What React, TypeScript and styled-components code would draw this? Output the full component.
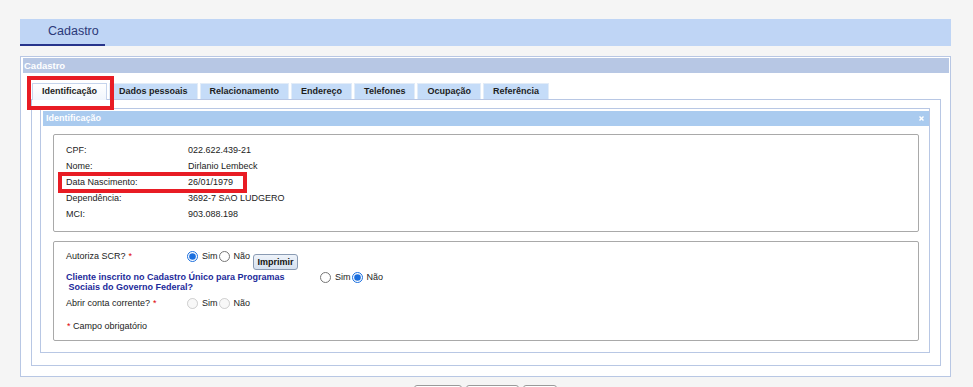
import React from "react";
import styled, { createGlobalStyle, css } from "styled-components";

const GlobalStyle = createGlobalStyle`
  html, body {
    margin: 0;
    padding: 0;
    background: #f5f5f5;
    font-family: "Liberation Sans", Arial, sans-serif;
    color: #222;
  }
`;

const Page = styled.div`
  padding: 19px 0 0 20px;
  width: 931px;
`;

const TopBar = styled.div`
  height: 27px;
  background: #bfd5f5;
  display: flex;
`;

const TopTab = styled.div`
  width: 85px;
  box-sizing: border-box;
  padding-left: 28px;
  line-height: 25px;
  font-size: 12.5px;
  color: #2c3979;
  border-bottom: 2px solid #27348b;
`;

const Panel = styled.div`
  margin-top: 10px;
  border: 1px solid #b8c7e4;
  background: #fff;
  padding: 1px 1px 10px 2px;
`;

const PanelHeader = styled.div`
  height: 15px;
  line-height: 15px;
  background: #b7c7e4;
  color: #fff;
  font-weight: bold;
  font-size: 9.5px;
  padding-left: 1px;
`;

const TabArea = styled.div`
  margin: 10px 8px 0 8px;
`;

const TabList = styled.div`
  display: flex;
  gap: 2px;
  padding-left: 1px;
  height: 16px;
`;

const Tab = styled.div<{ $active?: boolean; $marked?: boolean }>`
  position: relative;
  box-sizing: border-box;
  height: 16px;
  line-height: 14px;
  padding: 0 9px;
  font-size: 9px;
  font-weight: bold;
  color: #1d1d1d;
  background: #c5dcf8;
  border: 1px solid #e2ecf8;
  border-bottom: none;
  ${(p) =>
    p.$active &&
    css`
      height: 17px;
      background: linear-gradient(#ffffff, #f1f6fd);
      border-color: #c6d4ec;
      z-index: 1;
    `}
  ${(p) =>
    p.$marked &&
    css`
      &::after {
        content: "";
        position: absolute;
        left: -6px;
        top: -8px;
        width: 87px;
        height: 34px;
        box-sizing: border-box;
        border: 4px solid #e81c24;
      }
    `}
`;

const TabPanel = styled.div`
  border: 1px solid #b8c7e4;
  padding: 8px 10px 12px 8px;
`;

const Fieldset = styled.div`
  border: 1px solid #b8c7e4;
  padding: 2px 0 11px 2px;
`;

const FieldsetHeader = styled.div`
  height: 15px;
  line-height: 15px;
  background: #aacbef;
  color: #fff;
  font-weight: bold;
  font-size: 9px;
  padding: 0 5px 0 3px;
  display: flex;
  justify-content: space-between;
  align-items: center;
`;

const Box = styled.div<{ $height: number; $top: number }>`
  box-sizing: border-box;
  height: ${(p) => p.$height}px;
  margin: ${(p) => p.$top}px 10px 0 10px;
  border: 1px solid #a9a9a9;
  border-radius: 2px;
  padding: 7px 12px 0 12px;
  font-size: 9px;
`;

const InfoRow = styled.div<{ $marked?: boolean }>`
  position: relative;
  display: flex;
  line-height: 16px;
  ${(p) =>
    p.$marked &&
    css`
      &::after {
        content: "";
        position: absolute;
        left: -8px;
        top: -2px;
        width: 189px;
        height: 21px;
        box-sizing: border-box;
        border: 4px solid #e81c24;
      }
    `}
`;

const Label = styled.div<{ $width: number; $strong?: boolean }>`
  width: ${(p) => p.$width}px;
  flex-shrink: 0;
  ${(p) =>
    p.$strong &&
    css`
      font-weight: bold;
      color: #1c2a9a;
      line-height: 10px;
    `}
`;

const FormRow = styled.div<{ $top: number }>`
  display: flex;
  align-items: flex-start;
  margin-top: ${(p) => p.$top}px;
  line-height: 15px;
`;

const Required = styled.span`
  color: #e00000;
  margin-left: 3px;
`;

const RadioGroup = styled.div<{ $line?: number }>`
  display: flex;
  align-items: center;
  height: ${(p) => p.$line ?? 15}px;
`;

const Radio = styled.input`
  width: 11px;
  height: 11px;
  margin: 0 4px 0 0;
  accent-color: #1b6fde;
`;

const RadioText = styled.span`
  margin-right: 1px;
`;

const PrintButton = styled.button`
  margin: 5px 0 0 2px;
  height: 16px;
  width: 45px;
  padding: 0;
  font-family: inherit;
  font-size: 9px;
  font-weight: bold;
  color: #111;
  border: 1px solid #8a9bb3;
  border-radius: 3px;
  background: linear-gradient(#eef3fa, #d6e1f0);
`;

const Note = styled.div`
  margin: 8px 0 0 -2px;
  line-height: 15px;
`;

const ButtonBar = styled.div`
  display: flex;
  justify-content: center;
  gap: 4px;
  margin-top: 8px;
`;

const FooterButton = styled.button<{ $width: number }>`
  width: ${(p) => p.$width}px;
  height: 20px;
  background: #fff;
  border: 1px solid #9a9a9a;
  border-radius: 3px;
`;

const tabs = [
  "Identificação",
  "Dados pessoais",
  "Relacionamento",
  "Endereço",
  "Telefones",
  "Ocupação",
  "Referência",
];

const info = [
  ["CPF:", "022.622.439-21"],
  ["Nome:", "Dirlanio Lembeck"],
  ["Data Nascimento:", "26/01/1979"],
  ["Dependência:", "3692-7 SAO LUDGERO"],
  ["MCI:", "903.088.198"],
];

const CloseIcon = () => (
  <svg width="5" height="5" viewBox="0 0 5 5">
    <path d="M0 1 L1 0 L2.5 1.5 L4 0 L5 1 L3.5 2.5 L5 4 L4 5 L2.5 3.5 L1 5 L0 4 L1.5 2.5 Z" fill="#fff" />
  </svg>
);

const App = () => {
  return (
    <>
      <GlobalStyle />
      <Page>
        <TopBar>
          <TopTab>Cadastro</TopTab>
        </TopBar>
        <Panel>
          <PanelHeader>Cadastro</PanelHeader>
          <TabArea>
            <TabList>
              {tabs.map((t, i) => (
                <Tab key={t} $active={i === 0} $marked={i === 0}>
                  {t}
                </Tab>
              ))}
            </TabList>
            <TabPanel>
              <Fieldset>
                <FieldsetHeader>
                  <span>Identificação</span>
                  <CloseIcon />
                </FieldsetHeader>
                <Box $height={98} $top={8}>
                  {info.map(([k, v]) => (
                    <InfoRow key={k} $marked={k === "Data Nascimento:"}>
                      <Label $width={122}>{k}</Label>
                      <span>{v}</span>
                    </InfoRow>
                  ))}
                </Box>
                <Box $height={100} $top={9}>
                  <FormRow $top={0}>
                    <Label $width={121}>
                      Autoriza SCR?<Required>*</Required>
                    </Label>
                    <RadioGroup>
                      <Radio type="radio" name="scr" defaultChecked />
                      <RadioText>Sim</RadioText>
                      <Radio type="radio" name="scr" />
                      <RadioText>Não</RadioText>
                    </RadioGroup>
                    <PrintButton>Imprimir</PrintButton>
                  </FormRow>
                  <FormRow $top={2}>
                    <Label $width={254} $strong>
                      Cliente inscrito no Cadastro Único para Programas
                      <br />
                      &nbsp;Sociais do Governo Federal?
                    </Label>
                    <RadioGroup $line={10}>
                      <Radio type="radio" name="cad" />
                      <RadioText>Sim</RadioText>
                      <Radio type="radio" name="cad" defaultChecked />
                      <RadioText>Não</RadioText>
                    </RadioGroup>
                  </FormRow>
                  <FormRow $top={4}>
                    <Label $width={121}>
                      Abrir conta corrente?<Required>*</Required>
                    </Label>
                    <RadioGroup>
                      <Radio type="radio" name="cc" disabled />
                      <RadioText>Sim</RadioText>
                      <Radio type="radio" name="cc" disabled />
                      <RadioText>Não</RadioText>
                    </RadioGroup>
                  </FormRow>
                  <Note>
                    <Required>*</Required> Campo obrigatório
                  </Note>
                </Box>
              </Fieldset>
            </TabPanel>
          </TabArea>
        </Panel>
        <ButtonBar>
          <FooterButton $width={48} aria-label="Voltar" />
          <FooterButton $width={53} aria-label="Salvar" />
          <FooterButton $width={34} aria-label="Sair" />
        </ButtonBar>
      </Page>
    </>
  );
};

export default App;
